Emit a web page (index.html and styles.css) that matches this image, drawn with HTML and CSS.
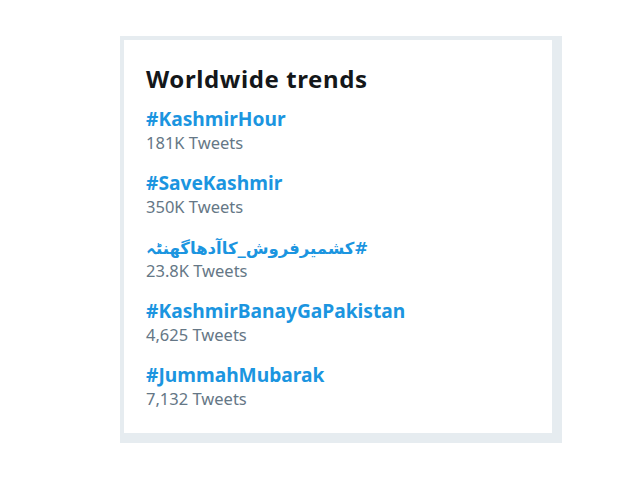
FILE: index.html
```html
<!DOCTYPE html>
<html lang="en">
<head>
<meta charset="utf-8">
<title>Worldwide trends</title>
<link rel="stylesheet" href="styles.css">
</head>
<body>
<div class="frame">
  <section class="card">
    <h2 class="title">Worldwide trends</h2>
    <ul class="trends">
      <li class="trend"><a class="tag" href="#">#KashmirHour</a><span class="count">181K Tweets</span></li>
      <li class="trend"><a class="tag" href="#">#SaveKashmir</a><span class="count">350K Tweets</span></li>
      <li class="trend"><a class="tag" href="#"><span class="rtl" dir="rtl">#کشمیرفروش_کاآدھاگھنٹہ</span></a><span class="count">23.8K Tweets</span></li>
      <li class="trend"><a class="tag" href="#">#KashmirBanayGaPakistan</a><span class="count">4,625 Tweets</span></li>
      <li class="trend"><a class="tag" href="#">#JummahMubarak</a><span class="count">7,132 Tweets</span></li>
    </ul>
  </section>
</div>
</body>
</html>
```
FILE: styles.css
```css
html, body {
  margin: 0;
  padding: 0;
  background: #ffffff;
}
body {
  font-family: "Noto Sans", "DejaVu Sans", sans-serif;
  padding: 36px 0 0 120px;
}
.frame {
  width: 428px;
  border-style: solid;
  border-color: #e6ecf0;
  border-width: 4px 10px 10px 4px;
  background: #ffffff;
}
.card {
  padding: 24px 22px 22px 22px;
  display: flex;
  flex-direction: column;
  gap: 13px;
}
.title {
  margin: 0;
  font-size: 24px;
  line-height: 30px;
  font-weight: 700;
  letter-spacing: 0.6px;
  color: #14171a;
}
.trends {
  list-style: none;
  margin: 0;
  padding: 0;
  display: flex;
  flex-direction: column;
  gap: 16px;
}
.trend {
  display: flex;
  flex-direction: column;
}
.tag {
  font-size: 19.2px;
  line-height: 24px;
  font-weight: 700;
  color: #1b95e0;
  text-decoration: none;
}
.rtl {
  font-family: "DejaVu Sans", sans-serif;
  font-size: 16.5px;
  line-height: 1;
  font-weight: 700;
}
.count {
  font-size: 16.5px;
  line-height: 24px;
  color: #657786;
}
```
